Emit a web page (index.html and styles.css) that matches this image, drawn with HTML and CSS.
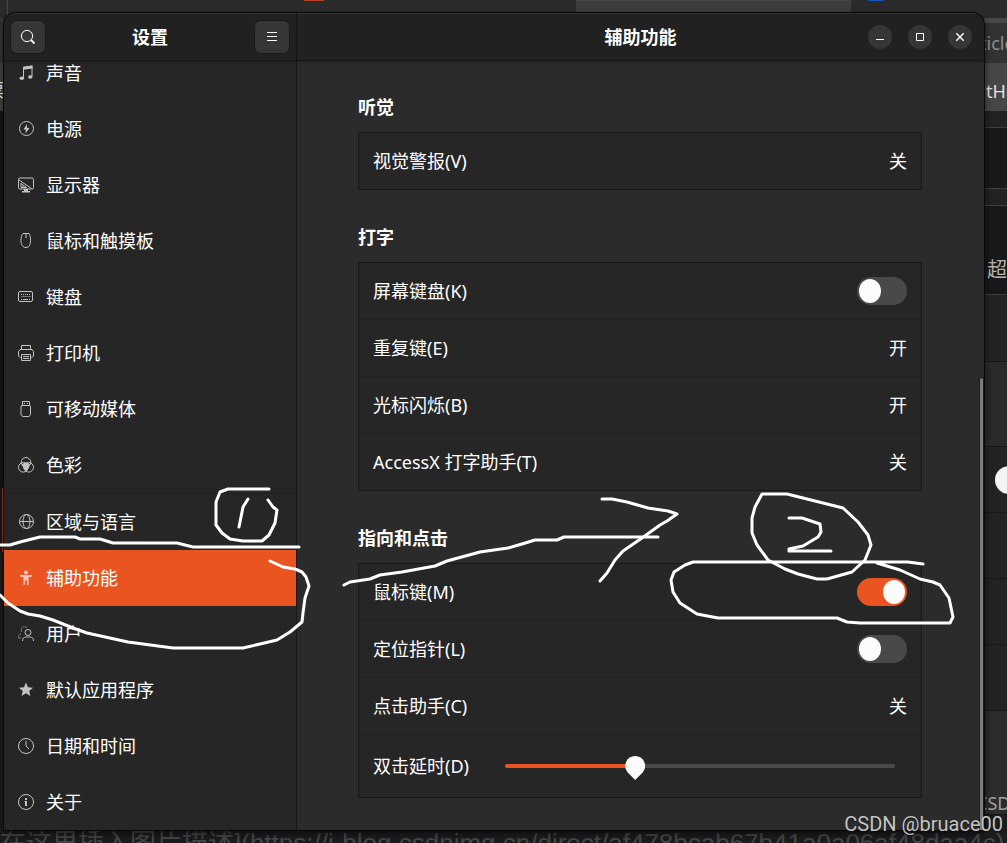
FILE: index.html
```html
<!DOCTYPE html>
<html lang="zh-CN">
<head>
<meta charset="utf-8">
<meta name="viewport" content="width=device-width, initial-scale=1">
<title>设置</title>
<link rel="stylesheet" href="styles.css">
</head>
<body>
<div class="desktop">
  <div class="behind" aria-hidden="true">
    <div class="tabs"><i class="tab-mark"></i><i class="tab"></i><i class="tab-active"></i><i class="tab-blue"></i></div>
    <div class="edge-left">
      <span class="strip s-bar"></span><span class="strip s-tool">票</span><span class="strip s-page"></span><span class="strip s-accent"></span>
    </div>
    <div class="edge-right">
      <span class="band b-top"></span>
      <span class="band b-url">ticle</span>
      <span class="band b-marks">tHub</span>
      <span class="band b-gap"></span>
      <span class="band b-blank"></span>
      <span class="band b-gap"></span>
      <span class="band b-link">超链接</span>
      <span class="band b-head"></span>
      <span class="band b-title"></span>
      <span class="band b-row b-knob"><i class="knob"></i></span>
      <span class="band b-row"></span>
      <span class="band b-row"></span>
      <span class="band b-row"></span>
      <span class="band b-foot">CSDN</span>
    </div>
    <div class="source">在这里插入图片描述](https://i-blog.csdnimg.cn/direct/af478bcab67b41a0a06af48daa4c)</div>
  </div>

  <main class="window">
    <aside class="sidebar">
      <header class="bar">
        <button class="tool" type="button" aria-label="搜索"><svg viewBox="0 0 16 16"><circle cx="7" cy="7" r="5.6"/><path d="M11 11l3.500 3.500" stroke-width="1.800"/></svg></button>
        <h1 class="title">设置</h1>
        <button class="tool" type="button" aria-label="菜单"><svg viewBox="0 0 16 16"><path d="M3 3.500h10M3 7.500h10M3 11.500h10"/></svg></button>
      </header>
      <nav class="nav">
        <a class="item" href="#sound"><svg viewBox="0 0 16 16"><path d="M5.500 13V2.500L14 1v10.500"/><path d="M5 1.800L14.500.5v3L5 4.800z" class="solid"/><ellipse cx="3.800" cy="13.200" rx="2.200" ry="1.800" class="solid"/><ellipse cx="12.300" cy="12" rx="2.200" ry="1.800" class="solid"/></svg>声音</a>
        <a class="item" href="#power"><svg viewBox="0 0 16 16"><circle cx="8.500" cy="7.500" r="7"/><path d="M9 3L5.500 8.500h2.300L7.500 12.500 11.500 7H9z" class="solid"/></svg>电源</a>
        <a class="item" href="#display"><svg viewBox="0 0 16 16"><rect x=".5" y="1" width="15" height="11" rx="1.500"/><path d="M1 3l12.500 8.500M3 6v4.500h5.500L3 6.500M5 8.500v2"/><path d="M6 12h4v2h2v1.500H4V14h2z" class="solid"/></svg>显示器</a>
        <a class="item" href="#mouse"><svg viewBox="0 0 16 16"><path d="M5 .5h6c1.200 1.500 1.500 4 1.500 7 0 4.500-1.500 7-4.500 7s-5-2.500-5-7c0-3 .5-5.500 2-7zM8 .5V5"/></svg>鼠标和触摸板</a>
        <a class="item" href="#keyboard"><svg viewBox="0 0 16 16"><rect x=".5" y="2.500" width="14" height="10" rx="1.500"/><path d="M3 5.500h10M3.500 7.500h9" stroke-dasharray="1 1"/><path d="M3 10.500h1M5 10.500h5M11 10.500h1"/></svg>键盘</a>
        <a class="item" href="#printer"><svg viewBox="0 0 16 16"><path d="M3.500 4V.5h9V4M2.500 12.500h-.5L.5 11V6.500L2 4.500h12l1.500 2V11L14 12.500h-.5M3.500 9.500h9v6h-9zM5 11.500h6M5 13.500h6"/></svg>打印机</a>
        <a class="item" href="#media"><svg viewBox="0 0 16 16"><path d="M4.500 4V.5h7V4M6 2.500h1M9 2.500h1M4 4.500h8l.5.500v8.500l-1.500 2H4.500l-1.500-2V5z"/></svg>可移动媒体</a>
        <a class="item" href="#color"><svg viewBox="0 0 16 16"><circle cx="8" cy="5.300" r="4.800"/><circle cx="5.300" cy="10.300" r="4.800"/><circle cx="10.700" cy="10.300" r="4.800"/><path d="M4 7.500q4-4 8 0l-1.500 4L8 14.500 5.500 11.500z" class="solid"/></svg>色彩</a>
        <a class="item divided" href="#region"><svg viewBox="0 0 16 16"><circle cx="8.500" cy="7.500" r="7"/><ellipse cx="8.500" cy="7.500" rx="3.500" ry="7"/><path d="M1.500 7.500h14"/></svg>区域与语言</a>
        <a class="item active" href="#access" aria-current="page"><svg viewBox="0 0 16 16"><circle cx="8" cy="2.500" r="2" class="solid"/><path d="M2 5h12v1.500l-3.500.8V15H9v-4.500H7V15H5.500V7.300L2 6.500z" class="solid"/></svg>辅助功能</a>
        <a class="item" href="#users"><svg viewBox="0 0 16 16"><g opacity=".5"><path d="M9 1.800C6-.8 2 1.500 3.500 6M3 7.500C1 8.500.5 10 .5 12H3"/></g><circle cx="10" cy="6.500" r="3"/><path d="M4.500 15c0-2.500 1-4 4-4h3c3 0 4 1.500 4 4"/></svg>用户</a>
        <a class="item" href="#defaults"><svg viewBox="0 0 16 16"><path d="M8 .5l2 4.800 5 .4-3.800 3.300 1.300 5L8 11.300 3.500 14l1.300-5L1 5.700l5-.4z" class="solid"/></svg>默认应用程序</a>
        <a class="item" href="#date"><svg viewBox="0 0 16 16"><circle cx="8" cy="8" r="7.500"/><path d="M8 3v5l3 3"/></svg>日期和时间</a>
        <a class="item" href="#about"><svg viewBox="0 0 16 16"><circle cx="8" cy="8" r="7.500"/><path d="M7 4h2v2H7zM6.500 7H9v5H7V8h-.5z" class="solid"/></svg>关于</a>
      </nav>
    </aside>

    <section class="panel">
      <header class="bar">
        <h2 class="title">辅助功能</h2>
        <div class="controls">
          <button class="ctl" type="button" aria-label="最小化"><svg viewBox="0 0 16 16"><path d="M4 10.500h8"/></svg></button>
          <button class="ctl" type="button" aria-label="最大化"><svg viewBox="0 0 16 16"><path d="M4.500 4.500h7v7h-7z"/></svg></button>
          <button class="ctl" type="button" aria-label="关闭"><svg viewBox="0 0 16 16"><path d="M4.300 4.300l7.400 7.400M11.700 4.300l-7.400 7.400" stroke-width="1.400"/></svg></button>
        </div>
      </header>
      <div class="scroll">
        <div class="group">
          <h3 class="heading">听觉</h3>
          <div class="card">
            <button class="row" type="button"><span>视觉警报(V)</span><span>关</span></button>
          </div>
        </div>
        <div class="group">
          <h3 class="heading">打字</h3>
          <div class="card">
            <label class="row"><span>屏幕键盘(K)</span><input class="switch" type="checkbox" role="switch"></label>
            <button class="row" type="button"><span>重复键(E)</span><span>开</span></button>
            <button class="row" type="button"><span>光标闪烁(B)</span><span>开</span></button>
            <button class="row" type="button"><span>AccessX 打字助手(T)</span><span>关</span></button>
          </div>
        </div>
        <div class="group">
          <h3 class="heading">指向和点击</h3>
          <div class="card">
            <label class="row"><span>鼠标键(M)</span><input class="switch" type="checkbox" role="switch" checked></label>
            <label class="row"><span>定位指针(L)</span><input class="switch" type="checkbox" role="switch"></label>
            <button class="row" type="button"><span>点击助手(C)</span><span>关</span></button>
            <label class="row tall"><span>双击延时(D)</span><input class="slider" type="range" min="0" max="1000" value="325" style="--fill:33%"></label>
          </div>
        </div>
      </div>
      <div class="thumb"></div>
    </section>
  </main>

  <svg class="ink" viewBox="0 0 1007 843" aria-hidden="true">
    <path d="M0 545L10 545 20 542 40 537H75L80 539H100L113 543H177L193 547H299"/>
    <path d="M270 561L283 567 295 569 302 572 306 577 309 586 305 598 303 613 302 622 290 632 277 640 260 644 243 648H173L143 644 128 642 87 633 73 628 53 620 40 616 28 614 20 611 8 603 0 595"/>
    <path d="M269 489H228L220 492 216 502V525L222 533 230 539 243 541H262L269 535 275 523 277 510 273 507 268 500"/>
    <path d="M248 499L243 507 241 517 239 527"/>
    <path d="M344 585L350 582 370 579 380 575 402 572 435 566 447 561 480 552 508 548 522 544 535 540H557L564 537H658"/>
    <path d="M602 499H612L627 502 648 508 668 511 677 514 667 521 660 525 642 538 623 551 615 560 607 573 600 581"/>
    <path d="M787 494H762L755 507 752 518V533L757 545 768 560 785 569 798 574 817 579H827L852 572 865 560 871 545 868 535 858 522 843 508 807 499z"/>
    <path d="M789 518H802L820 524 821 532 818 537 803 546 789 549V551H831"/>
    <path d="M923 564L908 562H693L685 565 674 572 671 580 673 592 680 603 697 614 718 618H837L847 622 860 623H950L953 617 949 598 940 585 933 582 920 579 900 570 877 563"/>
  </svg>
  <div class="watermark">CSDN @bruace00</div>
</div>
</body>
</html>
```
FILE: styles.css
```css
* { box-sizing: border-box; }

body {
  margin: 0;
  background: #1c1d1f;
  color: #fff;
  font: 18px/24px "Noto Sans", "Noto Sans CJK SC", sans-serif;
}

button { font: inherit; color: inherit; border: 0; padding: 0; background: none; }
h1, h2, h3 { margin: 0; font-size: 18px; font-weight: 700; }
svg { display: block; fill: none; stroke: currentColor; stroke-width: 1; }
.solid { fill: currentColor; stroke: none; }

.desktop {
  position: relative;
  display: flex;
  height: 100vh;
  padding: 13px 23px 13px 4px;
  overflow: hidden;
}

/* Windows showing around the edges of the settings window */
.behind { position: absolute; inset: 0; overflow: hidden; }
.tabs { position: absolute; inset: 0 0 auto; height: 23px; background: #2b2b2b; }
.tabs i { position: absolute; top: 0; }
.tab-mark { left: 7px; width: 1px; height: 18px; background: #4a4a4a; }
.tab { left: 304px; width: 20px; height: 1px; background: #b5432a; }
.tab-active { left: 576px; width: 275px; height: 12px; background: #3d3d3d; border-top: 1px solid #474747; }
.tab-blue { left: 868px; width: 16px; height: 1px; background: #1a56b8; }

.edge-left { position: absolute; inset: 18px auto 13px 0; width: 4px; display: flex; flex-direction: column; }
.strip { overflow: hidden; }
.s-bar { height: 45px; background: #363636; }
.s-tool { height: 48px; padding-top: 15px; background: #454545; text-indent: -14px; }
.s-page { height: 377px; background: #141618; }
.s-accent { height: 64px; border-right: 2px solid #a8401f; background: #181818; }

.edge-right { position: absolute; inset: 18px 0 0 auto; width: 23px; display: flex; flex-direction: column; }
.band { display: block; flex: none; overflow: hidden; white-space: nowrap; border-bottom: 1px solid #181818; background: #232323; }
.b-top { height: 5px; background: #484848; border: 0; }
.b-url { height: 40px; padding-top: 8px; background: #333; color: #8f8f8f; border: 0; text-indent: -4px; }
.b-marks { height: 48px; padding-top: 16px; background: #474747; color: #e0e0e0; border: 0; text-indent: 2px; }
.b-gap { height: 17px; background: #202224; border-color: #3c4043; }
.b-blank { height: 61px; background: #17191b; border-color: #3c4043; }
.b-link { height: 89px; padding: 52px 0 0 3px; background: #16181a; color: #b8b4ac; border-color: #3c4043; font-size: 20px; }
.b-head { height: 67px; }
.b-title { height: 85px; background: #2a2a2a; }
.b-row { height: 66px; }
.b-knob { padding: 19px 0 0 11px; }
.knob { display: block; width: 28px; height: 28px; border-radius: 50%; background: #f5f5f5; }
.b-foot { height: 104px; padding-top: 80px; background: #2c2c2c; color: #a0a0a0; text-indent: -8px; }

.source {
  position: absolute;
  inset: auto 0 0 0;
  height: 13px;
  overflow: hidden;
  background: #1b1c1e;
  color: #474747;
  font: 26px/26px "Liberation Sans", "Noto Sans CJK SC", sans-serif;
  white-space: nowrap;
}

/* Settings window */
.window {
  position: relative;
  display: flex;
  flex: 1;
  min-width: 0;
  overflow: hidden;
  border-radius: 12px 12px 0 0;
  background: #2b2b2b;
  box-shadow: 0 0 0 1px #080808, 0 3px 8px #000a;
}

.bar {
  position: relative;
  z-index: 1;
  display: flex;
  flex: none;
  align-items: center;
  justify-content: space-between;
  height: 48px;
  padding: 0 7px;
  background: #212121;
  border-top: 1px solid #333;
  border-bottom: 1px solid #171717;
  box-shadow: 0 1px 2px #0004;
}
.title { line-height: 24px; }

.tool {
  display: grid;
  place-items: center;
  width: 34px;
  height: 32px;
  border-radius: 6px;
  background: #363636;
  box-shadow: 0 0 0 1px #1a1a1a;
}
.tool svg, .ctl svg { width: 16px; height: 16px; }

.sidebar {
  display: flex;
  flex: none;
  flex-direction: column;
  width: 293px;
  border-right: 1px solid #181818;
  background: #262626;
}
.nav {
  display: flex;
  flex: 1;
  flex-direction: column;
  justify-content: flex-end;
  min-height: 0;
}
.item {
  display: flex;
  flex: none;
  align-items: center;
  gap: 12px;
  height: 56px;
  padding: 0 14px;
  color: #fff;
  text-decoration: none;
}
.item svg { width: 16px; height: 16px; color: #c3c3c3; }
.divided { height: 57px; border-top: 1px solid #1f1f1f; }
.active { background: #e95420; }
.active svg { color: #f9c8b6; }

.panel { position: relative; display: flex; flex: 1; flex-direction: column; min-width: 0; }
.panel .bar { display: grid; grid-template-columns: 1fr auto 1fr; padding: 0 12px; }
.panel .title { grid-column: 2; }
.controls { display: flex; justify-content: flex-end; gap: 16px; }
.ctl {
  display: grid;
  place-items: center;
  width: 24px;
  height: 24px;
  border-radius: 50%;
  background: #363636;
}

.scroll {
  display: flex;
  flex: 1;
  flex-direction: column;
  justify-content: flex-end;
  gap: 35px;
  min-height: 0;
  padding: 0 62px 32px 61px;
}
.heading { margin-bottom: 13px; line-height: 24px; }
.card { border: 1px solid #181818; background: #262626; }
.row {
  display: flex;
  align-items: center;
  justify-content: space-between;
  width: 100%;
  height: 56px;
  padding: 0 14px;
  text-align: left;
}
.row + .row { height: 57px; border-top: 1px solid #212121; }
.row + .tall { height: 63px; }

.switch {
  appearance: none;
  display: flex;
  align-items: center;
  width: 50px;
  height: 28px;
  margin: 0;
  padding: 0 2px;
  border-radius: 14px;
  background: #494949;
}
.switch::before {
  content: "";
  width: 22px;
  height: 24px;
  border-radius: 50%;
  background: #fbfbfb;
}
.switch:checked { justify-content: flex-end; background: #e95420; }

.slider {
  appearance: none;
  flex: 1;
  height: 24px;
  margin: 0 12px 0 36px;
  background: none;
}
.slider::-webkit-slider-runnable-track {
  height: 4px;
  border-radius: 2px;
  background: linear-gradient(to right, #e95420 var(--fill), #4a4a4a var(--fill));
}
.slider::-webkit-slider-thumb {
  appearance: none;
  width: 20px;
  height: 24px;
  margin-top: -8px;
  background: #fbfbfb;
  clip-path: path("M10 0A10 10 0 0 1 17.500 16.500L10 24 2.500 16.500A10 10 0 0 1 10 0z");
}

.thumb {
  position: absolute;
  inset: 365px 1px 0 auto;
  width: 3px;
  border-radius: 2px 2px 0 0;
  background: #7d7d7d;
  box-shadow: 0 0 0 1px #1c1c1c;
}

/* Hand-drawn marks and watermark */
.ink {
  position: absolute;
  inset: 0;
  width: 100%;
  height: 100%;
  color: #fff;
  stroke-width: 3;
  stroke-linecap: round;
  stroke-linejoin: round;
  pointer-events: none;
}
.watermark {
  position: absolute;
  right: 4px;
  bottom: 7px;
  color: #c4c4c4;
  font: 20px/24px Roboto, sans-serif;
  text-shadow: 0 1px 1px #0008;
}
```
